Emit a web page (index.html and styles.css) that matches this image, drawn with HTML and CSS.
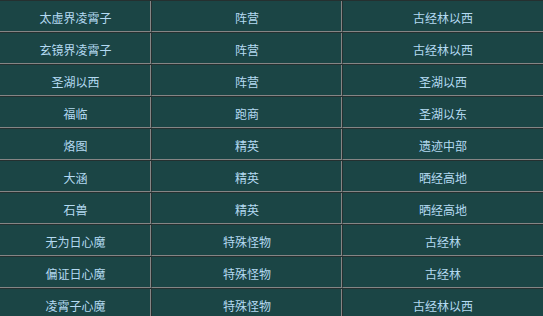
FILE: index.html
```html
<!DOCTYPE html>
<html lang="zh">
<head>
<meta charset="utf-8">
<link rel="stylesheet" href="styles.css">
</head>
<body>
<table class="grid">
<colgroup><col class="c1"><col class="c2"><col class="c3"></colgroup>
<tbody>
<tr><td>太虚界凌霄子</td><td>阵营</td><td>古经林以西</td></tr>
<tr><td>玄镜界凌霄子</td><td>阵营</td><td>古经林以西</td></tr>
<tr><td>圣湖以西</td><td>阵营</td><td>圣湖以西</td></tr>
<tr><td>福临</td><td>跑商</td><td>圣湖以东</td></tr>
<tr><td>烙图</td><td>精英</td><td>遗迹中部</td></tr>
<tr><td>大涵</td><td>精英</td><td>晒经高地</td></tr>
<tr><td>石兽</td><td>精英</td><td>晒经高地</td></tr>
<tr><td>无为日心魔</td><td>特殊怪物</td><td>古经林</td></tr>
<tr><td>偏证日心魔</td><td>特殊怪物</td><td>古经林</td></tr>
<tr><td>凌霄子心魔</td><td>特殊怪物</td><td>古经林以西</td></tr>
</tbody>
</table>
</body>
</html>
```
FILE: styles.css
```css
html, body {
  margin: 0;
  padding: 0;
  background: #1b4545;
  overflow: hidden;
}
.grid {
  width: 543px;
  border-collapse: separate;
  border-spacing: 0;
  table-layout: fixed;
  font-family: "Noto Sans CJK SC", "Noto Sans", sans-serif;
  font-size: 12px;
  color: #b4daf2;
}
.c1 { width: 152px; }
.c2 { width: 191px; }
.c3 { width: 200px; }
.grid td {
  height: 30px;
  padding: 3px 0 0 0;
  box-sizing: border-box;
  height: 32px;
  text-align: center;
  vertical-align: middle;
  line-height: 16px;
  background: #1b4545;
  border-top: 1px solid #253030;
  border-bottom: 1px solid #858585;
  border-right: 1px solid #253030;
  box-shadow: inset -1px 0 0 #858585;
}
.grid td:last-child {
  border-right: 0;
  box-shadow: none;
}
```
